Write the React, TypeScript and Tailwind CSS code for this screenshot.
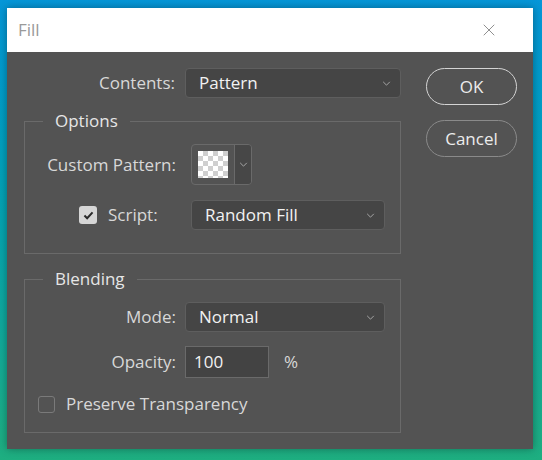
import { X } from 'lucide-react';

function Chevron({ className = '' }: { className?: string }) {
  return (
    <svg viewBox="0 0 10 6" className={`w-[9px] h-[5px] ${className}`} fill="none">
      <path d="M1 1l4 4 4-4" stroke="#b8b8b8" strokeWidth="1" />
    </svg>
  );
}

function Select({ value, width }: { value: string; width: string }) {
  return (
    <div
      className={`${width} h-[30px] flex items-center justify-between rounded-[4px] border border-[#5e5e5e] bg-[#454545] pl-[13px] pr-[9px] text-[#f2f2f2]`}
    >
      <span>{value}</span>
      <Chevron />
    </div>
  );
}

function Group({ title, children }: { title: string; children: React.ReactNode }) {
  return (
    <fieldset className="border border-[#6a6a6a] w-[377px]">
      <legend className="ml-[18px] px-[12px] leading-[20px] text-[#e6e6e6]">{title}</legend>
      {children}
    </fieldset>
  );
}

export default function App() {
  return (
    <div
      className="w-[542px] h-[460px] bg-gradient-to-b from-[#0696d8] to-[#1eae80] pt-[8px] pl-[7px] text-[17px] leading-[22px] text-[#d8d8d8]"
      style={{ fontFamily: '"Open Sans", "Noto Sans", sans-serif' }}
    >
      <div className="w-[526px] h-[441px] flex flex-col shadow-[0_0_8px_rgba(0,0,0,0.35)]">
        <div className="h-[44px] bg-white flex items-center justify-between pl-[11px] pr-[34px]">
          <span className="text-[#9a9a9a] text-[17px]">Fill</span>
          <X className="w-[20px] h-[20px] text-[#7a7a7a]" strokeWidth={1} />
        </div>

        <div className="flex-1 bg-[#535353] flex pl-[17px] pt-[16px] gap-[25px]">
          <div className="flex flex-col w-[377px]">
            <div className="flex items-center h-[30px]">
              <span className="w-[151px] text-right">Contents:</span>
              <div className="ml-[10px]">
                <Select value="Pattern" width="w-[216px]" />
              </div>
            </div>

            <div className="mt-[13px]">
              <Group title="Options">
                <div className="pt-[13px] pb-[23px] flex flex-col gap-[15px]">
                  <div className="flex items-center h-[41px]">
                    <span className="w-[151px] text-right">Custom Pattern:</span>
                    <div className="ml-[15px] flex h-[41px] rounded-[4px] border border-[#6a6a6a] overflow-hidden">
                      <div className="w-[42px] p-[6px]">
                        <div className="w-full h-full bg-[conic-gradient(#cfcfcf_25%,#ffffff_0_50%,#cfcfcf_0_75%,#ffffff_0)] bg-[length:10px_10px]" />
                      </div>
                      <div className="w-[17px] border-l border-[#6a6a6a] bg-[#474747] flex items-center justify-center">
                        <Chevron className="w-[8px]" />
                      </div>
                    </div>
                  </div>
                  <div className="flex items-center h-[30px]">
                    <div className="w-[166px] flex items-center pl-[54px]">
                      <span className="w-[18px] h-[18px] rounded-[3px] bg-[#d6d6d6] flex items-center justify-center">
                        <svg viewBox="0 0 12 10" className="w-[11px] h-[9px]" fill="none">
                          <path d="M1.5 5l3 3 6-6.5" stroke="#2a2a2a" strokeWidth="2.2" />
                        </svg>
                      </span>
                      <span className="ml-[11px]">Script:</span>
                    </div>
                    <Select value="Random Fill" width="w-[194px]" />
                  </div>
                </div>
              </Group>
            </div>

            <div className="mt-[15px]">
              <Group title="Blending">
                <div className="pt-[13px] pb-[19px] flex flex-col">
                  <div className="flex items-center h-[30px]">
                    <span className="w-[151px] text-right">Mode:</span>
                    <div className="ml-[9px]">
                      <Select value="Normal" width="w-[200px]" />
                    </div>
                  </div>
                  <div className="flex items-center h-[32px] mt-[14px]">
                    <span className="w-[151px] text-right">Opacity:</span>
                    <div className="ml-[9px] w-[84px] h-[32px] border border-[#6a6a6a] bg-[#434343] flex items-center pl-[8px] text-[#f2f2f2]">
                      100
                    </div>
                    <span className="ml-[15px]">%</span>
                  </div>
                  <div className="flex items-center h-[18px] mt-[17px] pl-[13px]">
                    <span className="w-[17px] h-[17px] rounded-[3px] border border-[#7a7a7a]" />
                    <span className="ml-[11px]">Preserve Transparency</span>
                  </div>
                </div>
              </Group>
            </div>
          </div>

          <div className="flex flex-col gap-[15px]">
            <button className="w-[91px] h-[37px] rounded-full border border-[#d4d4d4] text-[#ececec]">OK</button>
            <button className="w-[91px] h-[37px] rounded-full border border-[#8a8a8a] text-[#ececec]">Cancel</button>
          </div>
        </div>
      </div>
    </div>
  );
}
